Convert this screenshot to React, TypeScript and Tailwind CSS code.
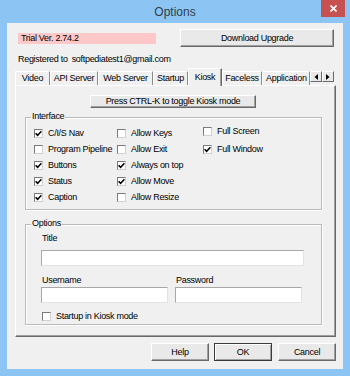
import React from "react";

function Check({ checked }: { checked?: boolean }) {
  return (
    <span className="w-[9px] h-[9px] bg-white border border-[#7a7a7a] border-r-[#d0d0d0] border-b-[#d0d0d0] flex items-center justify-center shrink-0">
      {checked && (
        <svg width="7" height="7" viewBox="0 0 7 7">
          <path d="M0.6 3.2 L2.6 5.3 L6.4 1.2" stroke="#000" strokeWidth="1.5" fill="none" />
        </svg>
      )}
    </span>
  );
}

function CheckRow({ label, checked, className = "" }: { label: string; checked?: boolean; className?: string }) {
  return (
    <div className={`h-[16px] flex items-center ${className}`}>
      <Check checked={checked} />
      <span className="ml-[5px] whitespace-nowrap leading-[13px]">{label}</span>
    </div>
  );
}

function Btn({ label, className = "", def }: { label: string; className?: string; def?: boolean }) {
  return (
    <div
      className={`flex items-center justify-center bg-[#e9e9e9] border ${
        def
          ? "border-[#3a3a3a] shadow-[inset_1px_1px_0_#ffffff,inset_-1px_-1px_0_#a0a0a0]"
          : "border-t-white border-l-white border-r-[#696969] border-b-[#696969] shadow-[inset_-1px_-1px_0_#a0a0a0]"
      } whitespace-nowrap leading-none ${className}`}
    >
      {label}
    </div>
  );
}

function Group({ label, className = "", children }: { label: string; className?: string; children?: React.ReactNode }) {
  return (
    <div className={`relative border border-[#bababa] shadow-[inset_1px_1px_0_#ffffff,1px_1px_0_#ffffff] ${className}`}>
      <span className="absolute -top-[8px] left-[5px] px-[1px] bg-[#f0f0f0] leading-[13px]">{label}</span>
      {children}
    </div>
  );
}

function Input({ className = "" }: { className?: string }) {
  return (
    <div className={`h-[16px] bg-white border border-[#a8a8a8] border-r-[#e3e3e3] border-b-[#e3e3e3] ${className}`} />
  );
}

function Tab({ label, className = "" }: { label: string; className?: string }) {
  return (
    <div
      className={`h-[14px] shrink-0 flex items-center justify-center overflow-hidden whitespace-nowrap border-t border-t-white border-l border-l-white border-r border-r-[#8a8a8a] leading-none ${className}`}
    >
      {label}
    </div>
  );
}

function Arrow({ dir }: { dir: "l" | "r" }) {
  return (
    <div className="w-[12px] h-[11px] bg-[#e9e9e9] border border-t-white border-l-white border-r-[#696969] border-b-[#696969] flex items-center justify-center">
      <svg width="4" height="6" viewBox="0 0 4 6">
        {dir === "l" ? <path d="M4 0 L0.5 3 L4 6 Z" fill="#000" /> : <path d="M0 0 L3.5 3 L0 6 Z" fill="#000" />}
      </svg>
    </div>
  );
}

export default function App() {
  return (
    <div className="w-[350px] h-[376px] bg-[#8cc5f3] flex flex-col font-['Liberation_Sans',Arial,sans-serif] text-[9px] tracking-[-0.3px] text-black overflow-hidden">
      {/* title bar */}
      <div className="relative h-[23px] flex items-center justify-center shrink-0">
        <span className="text-[12px] tracking-normal text-[#2f3d4c] leading-none font-['Liberation_Sans',Arial,sans-serif]">Options</span>
        <div className="absolute top-0 right-[5px] w-[24px] h-[17px] bg-[#c75050] flex items-center justify-center">
          <svg width="7" height="7" viewBox="0 0 7 7">
            <path d="M0.5 0.5 L6.5 6.5 M6.5 0.5 L0.5 6.5" stroke="#fff" strokeWidth="1.6" />
          </svg>
        </div>
      </div>

      {/* client */}
      <div className="ml-[7px] w-[336px] h-[346px] bg-[#f0f0f0] flex flex-col shrink-0">
        <div className="mt-[6px] h-[18px] flex items-center">
          <div className="ml-[11px] w-[138px] h-[11px] bg-[#ffc8c8] flex items-center pl-[3px] leading-none">Trial Ver. 2.74.2</div>
          <Btn label="Download Upgrade" className="ml-[24px] w-[154px] h-[18px]" />
        </div>
        <div className="mt-[6px] ml-[11px] h-[13px] leading-[13px] flex gap-[4px]">
          <span>Registered to</span>
          <span>softpediatest1@gmail.com</span>
        </div>

        {/* tabs */}
        <div className="mt-[2px] ml-[8px] h-[17px] flex items-end">
          <Tab label="Video" className="w-[35px]" />
          <Tab label="API Server" className="w-[48px]" />
          <Tab label="Web Server" className="w-[55px]" />
          <Tab label="Startup" className="w-[35px]" />
          <div className="relative z-10 w-[34px] h-[18px] -mb-[1px] shrink-0 bg-[#f0f0f0] flex items-center justify-center border-t border-t-white border-l border-l-white border-r border-r-[#696969] shadow-[inset_-1px_0_0_#a0a0a0] leading-none pb-[1px]">
            Kiosk
          </div>
          <Tab label="Faceless" className="w-[40px]" />
          <Tab label="Application" className="w-[48px] justify-start pl-[3px]" />
          <div className="self-start mt-[3px] flex">
            <Arrow dir="l" />
            <Arrow dir="r" />
          </div>
        </div>

        {/* panel */}
        <div className="ml-[8px] w-[321px] h-[252px] border border-t-white border-l-white border-r-[#696969] border-b-[#696969] shadow-[inset_-1px_-1px_0_#a0a0a0] flex flex-col">
          <Btn label="Press CTRL-K to toggle Kiosk mode" className="mt-[9px] ml-[74px] w-[166px] h-[13px]" />

          <Group label="Interface" className="mt-[9px] ml-[9px] w-[297px] h-[93px]">
            <div className="flex">
              <div className="ml-[8px] w-[83px] pt-[7px] flex flex-col">
                <CheckRow label="C/I/S Nav" checked />
                <CheckRow label="Program Pipeline" />
                <CheckRow label="Buttons" checked />
                <CheckRow label="Status" checked />
                <CheckRow label="Caption" checked />
              </div>
              <div className="w-[86px] pt-[7px] flex flex-col">
                <CheckRow label="Allow Keys" />
                <CheckRow label="Allow Exit" />
                <CheckRow label="Always on top" checked />
                <CheckRow label="Allow Move" checked />
                <CheckRow label="Allow Resize" />
              </div>
              <div className="pt-[5px] flex flex-col">
                <CheckRow label="Full Screen" />
                <CheckRow label="Full Window" checked className="mt-[2px]" />
              </div>
            </div>
          </Group>

          <Group label="Options" className="mt-[14px] ml-[9px] w-[297px] h-[101px]">
            <div className="flex flex-col">
              <div className="mt-[7px] ml-[16px] h-[13px] leading-[13px]">Title</div>
              <Input className="mt-[5px] ml-[15px] w-[263px]" />
              <div className="mt-[8px] ml-[15px] flex">
                <div className="w-[127px] flex flex-col">
                  <div className="pl-[1px] h-[13px] leading-[13px]">Username</div>
                  <Input className="w-[127px]" />
                </div>
                <div className="ml-[7px] w-[127px] flex flex-col">
                  <div className="pl-[1px] h-[13px] leading-[13px]">Password</div>
                  <Input className="w-[127px]" />
                </div>
              </div>
              <CheckRow label="Startup in Kiosk mode" className="mt-[5px] ml-[16px]" />
            </div>
          </Group>
        </div>

        {/* bottom buttons */}
        <div className="mt-[6px] ml-[144px] flex">
          <Btn label="Help" className="w-[58px] h-[18px]" />
          <Btn label="OK" def className="ml-[5px] w-[58px] h-[18px]" />
          <Btn label="Cancel" className="ml-[6px] w-[58px] h-[18px]" />
        </div>
      </div>
    </div>
  );
}
